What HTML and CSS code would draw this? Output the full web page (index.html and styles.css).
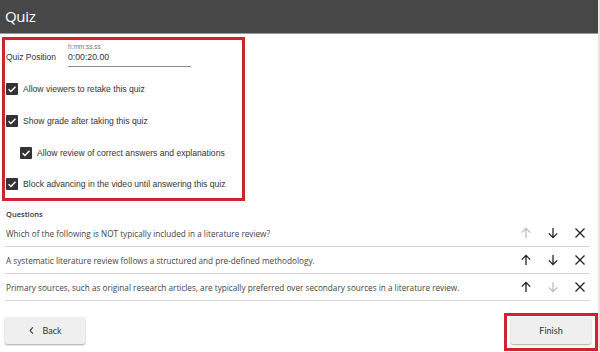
FILE: index.html
```html
<html>

<head>
    <link rel="stylesheet" href="styles.css">
</head>

<body>
    <div class="page">
        <div class="header">Quiz</div>
        <div class="settings">
            <div class="field">
                <div class="field-label">Quiz Position</div>
                <div class="field-input">
                    <div class="hint">h:mm:ss.ss</div>
                    <div class="value">0:00:20.00</div>
                </div>
            </div>
            <div class="check">
                <svg class="box" viewBox="0 0 12 12"><rect width="12" height="12" rx="1" fill="#333"/><path d="M2.6 6.2l2.3 2.3 4.6-4.8" stroke="#fff" stroke-width="1.4" fill="none"/></svg>
                <span>Allow viewers to retake this quiz</span>
            </div>
            <div class="check">
                <svg class="box" viewBox="0 0 12 12"><rect width="12" height="12" rx="1" fill="#333"/><path d="M2.6 6.2l2.3 2.3 4.6-4.8" stroke="#fff" stroke-width="1.4" fill="none"/></svg>
                <span>Show grade after taking this quiz</span>
            </div>
            <div class="check sub">
                <svg class="box" viewBox="0 0 12 12"><rect width="12" height="12" rx="1" fill="#333"/><path d="M2.6 6.2l2.3 2.3 4.6-4.8" stroke="#fff" stroke-width="1.4" fill="none"/></svg>
                <span>Allow review of correct answers and explanations</span>
            </div>
            <div class="check">
                <svg class="box" viewBox="0 0 12 12"><rect width="12" height="12" rx="1" fill="#333"/><path d="M2.6 6.2l2.3 2.3 4.6-4.8" stroke="#fff" stroke-width="1.4" fill="none"/></svg>
                <span>Block advancing in the video until answering this quiz</span>
            </div>
        </div>

        <div class="questions">
            <div class="q-title">Questions</div>
            <div class="q-row">
                <span class="q-text">Which of the following is NOT typically included in a literature review?</span>
                <div class="q-actions">
                    <svg class="icon off" viewBox="0 0 12 12"><path d="M6 11V1.5M1.8 5.6L6 1.4l4.2 4.2"/></svg>
                    <svg class="icon" viewBox="0 0 12 12"><path d="M6 1v9.5M1.8 6.4L6 10.6l4.2-4.2"/></svg>
                    <svg class="icon" viewBox="0 0 12 12"><path d="M1.5 1.5l9 9M10.5 1.5l-9 9"/></svg>
                </div>
            </div>
            <div class="q-row">
                <span class="q-text">A systematic literature review follows a structured and pre-defined methodology.</span>
                <div class="q-actions">
                    <svg class="icon" viewBox="0 0 12 12"><path d="M6 11V1.5M1.8 5.6L6 1.4l4.2 4.2"/></svg>
                    <svg class="icon" viewBox="0 0 12 12"><path d="M6 1v9.5M1.8 6.4L6 10.6l4.2-4.2"/></svg>
                    <svg class="icon" viewBox="0 0 12 12"><path d="M1.5 1.5l9 9M10.5 1.5l-9 9"/></svg>
                </div>
            </div>
            <div class="q-row">
                <span class="q-text">Primary sources, such as original research articles, are typically preferred over secondary sources in a literature review.</span>
                <div class="q-actions">
                    <svg class="icon" viewBox="0 0 12 12"><path d="M6 11V1.5M1.8 5.6L6 1.4l4.2 4.2"/></svg>
                    <svg class="icon off" viewBox="0 0 12 12"><path d="M6 1v9.5M1.8 6.4L6 10.6l4.2-4.2"/></svg>
                    <svg class="icon" viewBox="0 0 12 12"><path d="M1.5 1.5l9 9M10.5 1.5l-9 9"/></svg>
                </div>
            </div>
        </div>

        <div class="footer">
            <div class="btn back">
                <svg class="chev" viewBox="0 0 8 10"><path d="M5.5 1.5L2.5 5l3 3.5"/></svg>
                <span>Back</span>
            </div>
            <div class="finish-wrap">
                <div class="btn">Finish</div>
            </div>
        </div>
    </div>
</body>

</html>
```

FILE: styles.css
```css
body,
html {
    margin: 0;
    background: #fff;
}

.page {
    width: 598px;
    height: 352px;
    border-right: 2px solid #e6e6e6;
    display: flex;
    flex-direction: column;
}

.header {
    height: 34px;
    background: #474747;
    border-bottom: 1px solid #9a9a9a;
    color: #fff;
    font-family: "Open Sans", sans-serif;
    font-size: 15px;
    letter-spacing: -0.3px;
    line-height: 33px;
    padding-left: 5px;
    box-sizing: border-box;
}

.settings {
    margin: 3px 0 0 2px;
    width: 243px;
    height: 164px;
    box-sizing: border-box;
    border: 3px solid #d2212f;
    padding: 3px 0 0 1px;
    font-family: "Liberation Sans", Arial, sans-serif;
    color: #333;
}

.field {
    display: flex;
    align-items: flex-end;
    height: 24px;
}

.field-label {
    font-size: 8.5px;
    width: 62px;
    padding-bottom: 5px;
}

.field-input {
    width: 123px;
    border-bottom: 1px solid #888;
}

.hint {
    font-size: 6.5px;
    color: #777;
    line-height: 8px;
}

.value {
    font-size: 8.7px;
    line-height: 13px;
    padding-bottom: 2px;
}

.check {
    display: flex;
    align-items: center;
    height: 32px;
    font-size: 8.6px;
}

.check:nth-child(2) {
    margin-top: 6px;
}

.check.sub {
    padding-left: 14px;
    height: 31px;
}

.box {
    width: 12px;
    height: 12px;
    margin-right: 5px;
    flex: none;
}

.questions {
    margin: 7px 8px 0 5px;
    font-family: "Open Sans", sans-serif;
    color: #444;
}

.q-title {
    font-size: 7.5px;
    font-weight: 600;
    color: #333;
    padding-left: 1px;
    height: 12px;
    line-height: 12px;
}

.q-row {
    display: flex;
    align-items: center;
    height: 26px;
    border-bottom: 1px solid #d6d6d6;
    font-size: 8.2px;
}

.q-text {
    flex: 1;
    padding-left: 1px;
}

.q-actions {
    display: flex;
    gap: 15px;
    padding-right: 4px;
}

.icon {
    width: 12px;
    height: 12px;
    fill: none;
    stroke: #222;
    stroke-width: 1.3;
}

.icon.off {
    stroke: #bcbcbc;
}

.footer {
    display: flex;
    justify-content: space-between;
    align-items: flex-start;
    margin: 16px 0 0 5px;
}

.btn {
    width: 80px;
    height: 27px;
    background: #efefef;
    border-radius: 2px;
    box-shadow: 0 1px 2px rgba(0, 0, 0, 0.35);
    display: flex;
    align-items: center;
    justify-content: center;
    font-family: Lato, sans-serif;
    font-size: 9px;
    color: #333;
}

.back .chev {
    width: 7px;
    height: 9px;
    fill: none;
    stroke: #333;
    stroke-width: 1.3;
    margin-right: 7px;
}

.finish-wrap {
    border: 3px solid #d2212f;
    padding: 1px 4px 4px 4px;
    margin-top: -4px;
}
```
